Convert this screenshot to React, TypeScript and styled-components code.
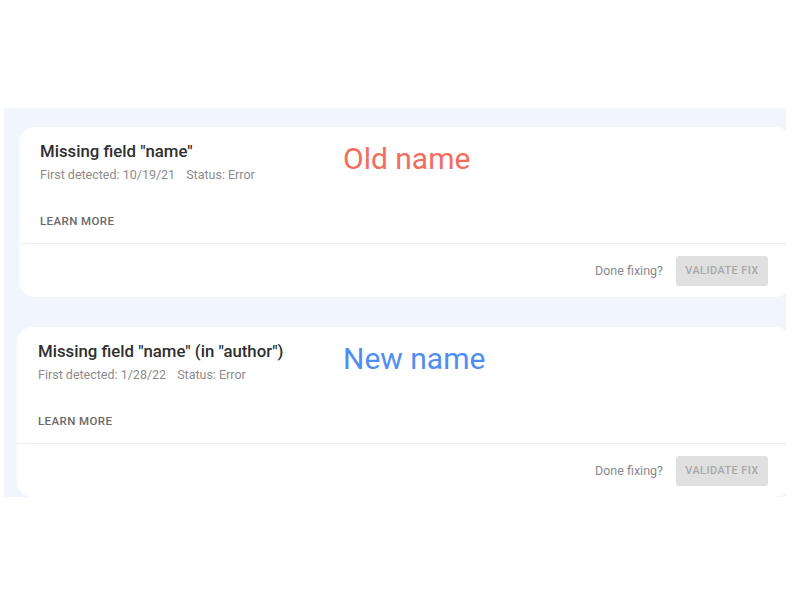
import styled, { createGlobalStyle } from "styled-components";

const GlobalStyle = createGlobalStyle`
  html, body {
    margin: 0;
    background: #ffffff;
    font-family: Roboto, "Liberation Sans", sans-serif;
  }
`;

interface IIssue {
  title: string;
  detected: string;
  status: string;
  label: string;
  tone: "old" | "new";
  shift: number;
}

const ISSUES: IIssue[] = [
  {
    title: 'Missing field "name"',
    detected: "10/19/21",
    status: "Error",
    label: "Old name",
    tone: "old",
    shift: 15,
  },
  {
    title: 'Missing field "name" (in "author")',
    detected: "1/28/22",
    status: "Error",
    label: "New name",
    tone: "new",
    shift: 13,
  },
];

// headline x inside the panel, same on both cards
const HEADLINE_X = 339;

const Page = styled.div`
  padding: 108px 0 0 4px;
`;

const Panel = styled.section`
  width: 782px;
  height: 389px;
  box-sizing: border-box;
  padding-top: 19px;
  background: #f1f5fd;
  overflow: hidden;
  display: flex;
  flex-direction: column;
  gap: 30px;
`;

const Card = styled.article<{ $shift: number }>`
  height: 170px;
  margin: 0 -5px 0 ${(p) => p.$shift}px;
  flex-shrink: 0;
  background: #ffffff;
  border-radius: 16px;
  display: flex;
  flex-direction: column;
`;

const Body = styled.div<{ $lead: number }>`
  height: 117px;
  box-sizing: border-box;
  padding: 14px 0 0 21px;
  display: grid;
  grid-template-columns: ${(p) => p.$lead}px 1fr;
  border-bottom: 1px solid #eeeeee;
`;

const Info = styled.div`
  display: flex;
  flex-direction: column;
`;

const Title = styled.h3`
  margin: 0;
  font-size: 16.8px;
  line-height: 20px;
  font-weight: 500;
  color: #2f2f2f;
  white-space: nowrap;
`;

const Meta = styled.div`
  margin-top: 6px;
  font-size: 12.5px;
  line-height: 16px;
  color: #8c8c8c;
  display: flex;
  gap: 11px;
`;

const LearnMore = styled.a`
  margin-top: 30px;
  font-size: 11.5px;
  line-height: 16px;
  font-weight: 500;
  letter-spacing: 0.4px;
  text-transform: uppercase;
  color: #6a6a6a;
`;

const Headline = styled.div<{ $tone: "old" | "new" }>`
  margin-top: 0;
  font-size: 30px;
  line-height: 36px;
  color: ${(p) => (p.$tone === "old" ? "#f26d5e" : "#4e8ef2")};
`;

const Footer = styled.div`
  flex: 1;
  display: flex;
  align-items: center;
  justify-content: flex-end;
  gap: 13px;
  padding-right: 23px;
`;

const Prompt = styled.span`
  font-size: 12.5px;
  color: #8a8a8a;
`;

const ValidateButton = styled.button`
  width: 92px;
  height: 30px;
  border: none;
  border-radius: 3px;
  background: #e0e0e0;
  color: #a9a9a9;
  font-family: inherit;
  font-size: 11px;
  font-weight: 500;
  letter-spacing: 0.4px;
  padding: 0;
`;

const IssueCard = ({ issue }: { issue: IIssue }) => (
  <Card $shift={issue.shift}>
    <Body $lead={HEADLINE_X - issue.shift - 21}>
      <Info>
        <Title>{issue.title}</Title>
        <Meta>
          <span>First detected: {issue.detected}</span>
          <span>Status: {issue.status}</span>
        </Meta>
        <LearnMore>Learn more</LearnMore>
      </Info>
      <Headline $tone={issue.tone}>{issue.label}</Headline>
    </Body>
    <Footer>
      <Prompt>Done fixing?</Prompt>
      <ValidateButton disabled>VALIDATE FIX</ValidateButton>
    </Footer>
  </Card>
);

const App = () => (
  <>
    <GlobalStyle />
    <Page>
      <Panel>
        {ISSUES.map((issue) => (
          <IssueCard key={issue.title} issue={issue} />
        ))}
      </Panel>
    </Page>
  </>
);

export default App;
